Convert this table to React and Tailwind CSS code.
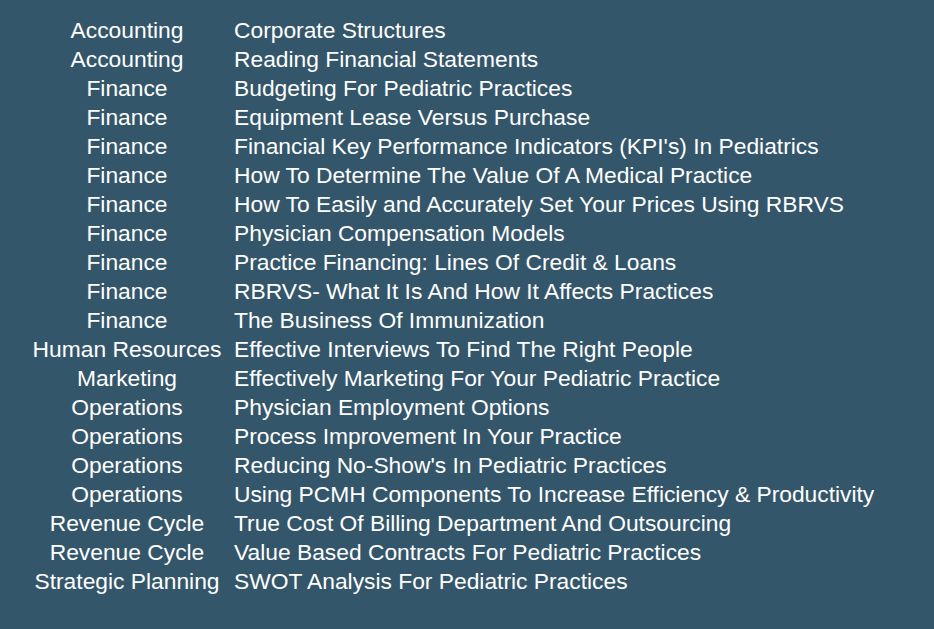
const rows = [
  ["Accounting", "Corporate Structures"],
  ["Accounting", "Reading Financial Statements"],
  ["Finance", "Budgeting For Pediatric Practices"],
  ["Finance", "Equipment Lease Versus Purchase"],
  ["Finance", "Financial Key Performance Indicators (KPI's) In Pediatrics"],
  ["Finance", "How To Determine The Value Of A Medical Practice"],
  ["Finance", "How To Easily and Accurately Set Your Prices Using RBRVS"],
  ["Finance", "Physician Compensation Models"],
  ["Finance", "Practice Financing: Lines Of Credit & Loans"],
  ["Finance", "RBRVS- What It Is And How It Affects Practices"],
  ["Finance", "The Business Of Immunization"],
  ["Human Resources", "Effective Interviews To Find The Right People"],
  ["Marketing", "Effectively Marketing For Your Pediatric Practice"],
  ["Operations", "Physician Employment Options"],
  ["Operations", "Process Improvement In Your Practice"],
  ["Operations", "Reducing No-Show's In Pediatric Practices"],
  ["Operations", "Using PCMH Components To Increase Efficiency & Productivity"],
  ["Revenue Cycle", "True Cost Of Billing Department And Outsourcing"],
  ["Revenue Cycle", "Value Based Contracts For Pediatric Practices"],
  ["Strategic Planning", "SWOT Analysis For Pediatric Practices"],
];

export default function App() {
  return (
    <div
      className="w-[934px] h-[629px] bg-[#34566a] text-white overflow-hidden pt-[16px] pl-[30px]"
      style={{ fontFamily: '"Liberation Sans", Arial, sans-serif' }}
    >
      <div className="flex flex-col">
        {rows.map(([cat, title], i) => (
          <div key={i} className="flex h-[29px] items-center text-[22.8px] leading-[29px] whitespace-nowrap">
            <div className="w-[194px] text-center">{cat}</div>
            <div className="ml-[10px]">{title}</div>
          </div>
        ))}
      </div>
    </div>
  );
}
